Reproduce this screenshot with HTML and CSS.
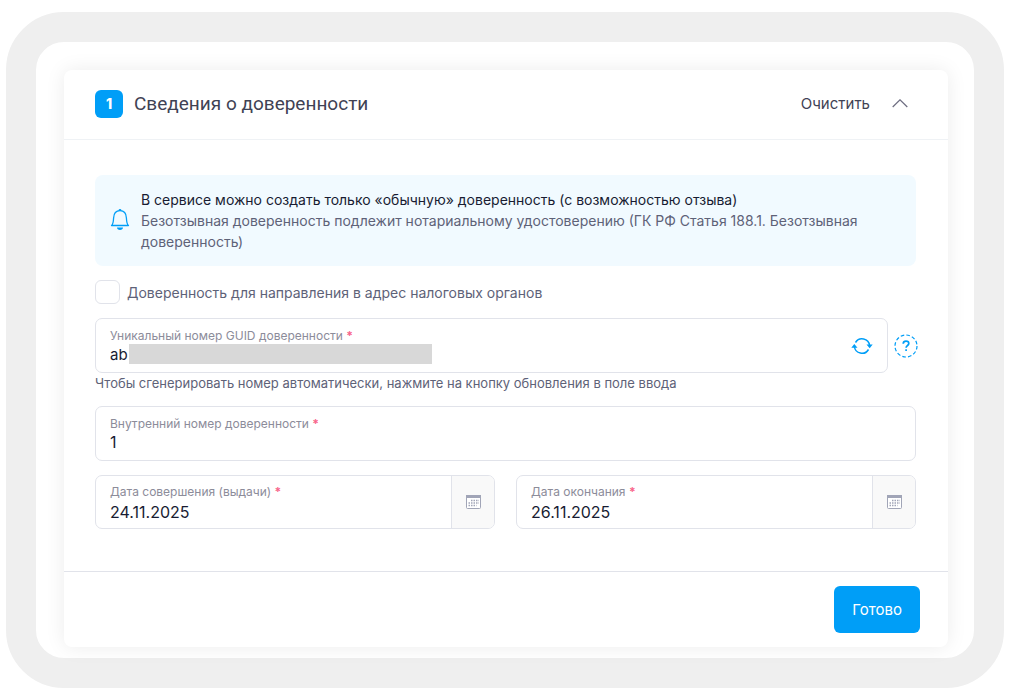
FILE: index.html
```
<!DOCTYPE html>
<html lang="ru">
<head>
  <meta charset="UTF-8">
  <meta name="viewport" content="width=device-width, initial-scale=1.0">
  <title>Сведения о доверенности</title>
  <link rel="stylesheet" href="styles.css">
</head>
<body>
  <main class="frame">
    <form class="card">
      <header class="card-header">
        <span class="step">1</span>
        <h1 class="card-title">Сведения о доверенности</h1>
        <button type="button" class="clear-btn">Очистить</button>
        <button type="button" class="icon-btn" aria-label="Свернуть">
          <svg width="16" height="10" viewBox="0 0 16 10" fill="none" stroke="#6d6d80" stroke-width="1.2"><path d="M.7 8 8 .8 15.3 8"/></svg>
        </button>
      </header>

      <div class="card-body">
        <div class="notice">
          <!-- колокольчик -->
          <svg class="notice-icon" width="20" height="24" viewBox="0 0 20 24">
            <path d="M1.500 16.500C3 15.500 3.400 12.800 3.600 9 3.800 4.500 6 1.700 10 1.700s6.200 2.800 6.400 7.300c.2 3.800.6 6.500 2.100 7.500z" fill="none" stroke="#009ef7" stroke-width="1.300" stroke-linejoin="round"/>
            <path d="M8.600 1.900V1.200a1.400 1.200 0 0 1 2.800 0v.7zM7 18.500h6c0 1.600-1.200 2.500-3 2.500S7 20.100 7 18.500z" fill="#009ef7"/>
          </svg>
          <div class="notice-text">
            <div class="notice-title">В сервисе можно создать только «обычную» доверенность (с возможностью отзыва)</div>
            <div>Безотзывная доверенность подлежит нотариальному удостоверению (ГК РФ Статья 188.1. Безотзывная доверенность)</div>
          </div>
        </div>

        <label class="check">
          <input type="checkbox" class="check-box">
          <span>Доверенность для направления в адрес налоговых органов</span>
        </label>

        <div class="guid-row">
          <div class="field">
            <div class="field-main">
              <label class="field-label" for="guid">Уникальный номер GUID доверенности <span class="req">*</span></label>
              <div class="masked">
                <input class="field-input masked-input" id="guid" type="text" value="ab">
                <span class="mask"></span>
              </div>
            </div>
            <button type="button" class="icon-btn refresh" aria-label="Обновить">
              <svg width="22" height="18" viewBox="0 0 22 18" fill="none" stroke="#009ef7" stroke-width="1.500">
                <path d="M4.500 5.500A7.600 7.600 0 0 1 18.600 8.500M17.500 12.500A7.600 7.600 0 0 1 3.400 9.500"/>
                <path d="M.3 10.800 3.300 7l3.200 3.800zM15.500 7.500h6.200L18.700 11.300z" fill="#009ef7" stroke="none"/>
              </svg>
            </button>
          </div>
          <button type="button" class="icon-btn help" aria-label="Справка">
            <svg width="24" height="24" viewBox="0 0 24 24" fill="none" stroke="#009ef7">
              <circle cx="12" cy="12" r="11" stroke-width="1.200" stroke-dasharray="3.600 2.160"/>
              <path d="M9.200 9.700c.1-1.600 1.200-2.500 2.800-2.500s2.800.9 2.800 2.300c0 2.100-2.700 1.900-2.700 4.300M12.100 15.300v1.700" stroke-width="1.700"/>
            </svg>
          </button>
        </div>
        <p class="hint">Чтобы сгенерировать номер автоматически, нажмите на кнопку обновления в поле ввода</p>

        <div class="field">
          <div class="field-main">
            <label class="field-label" for="number">Внутренний номер доверенности <span class="req">*</span></label>
            <input class="field-input" id="number" type="text" value="1">
          </div>
        </div>

        <div class="dates">
          <div class="field">
            <div class="field-main">
              <label class="field-label" for="issued">Дата совершения (выдачи) <span class="req">*</span></label>
              <input class="field-input" id="issued" type="text" value="24.11.2025">
            </div>
            <button type="button" class="calendar-btn" aria-label="Выбрать дату">
              <svg width="15" height="14" viewBox="0 0 15 14">
                <rect x=".5" y=".5" width="14" height="13" rx="1" fill="#fff" stroke="#a1a5b7"/>
                <path d="M0 0h15v3H0z" fill="#a1a5b7"/>
                <path d="M5 5.500h8M2.500 8h10.500M2.500 10.500h8" stroke="#a1a5b7" stroke-width="1.500" stroke-dasharray="1.500 1"/>
              </svg>
            </button>
          </div>
          <div class="field">
            <div class="field-main">
              <label class="field-label" for="expires">Дата окончания <span class="req">*</span></label>
              <input class="field-input" id="expires" type="text" value="26.11.2025">
            </div>
            <button type="button" class="calendar-btn" aria-label="Выбрать дату">
              <svg width="15" height="14" viewBox="0 0 15 14">
                <rect x=".5" y=".5" width="14" height="13" rx="1" fill="#fff" stroke="#a1a5b7"/>
                <path d="M0 0h15v3H0z" fill="#a1a5b7"/>
                <path d="M5 5.500h8M2.500 8h10.500M2.500 10.500h8" stroke="#a1a5b7" stroke-width="1.500" stroke-dasharray="1.500 1"/>
              </svg>
            </button>
          </div>
        </div>
      </div>

      <footer class="card-footer">
        <button type="button" class="submit">Готово</button>
      </footer>
    </form>
  </main>
</body>
</html>
```

FILE: styles.css
```
* {
  box-sizing: border-box;
}

body {
  margin: 0;
  background: #fff;
  font-family: Inter, "Noto Sans", sans-serif;
  font-size: 14px;
  line-height: 21px;
  color: #5e6278;
}

button {
  font-family: inherit;
  cursor: pointer;
}

/* серая рамка вокруг карточки */
.frame {
  margin: 12px 6px;
  padding: 28px 26px 11px 28px;
  border: 30px solid #efefef;
  border-radius: 58px;
}

.card {
  background: #fff;
  border-radius: 8px;
  box-shadow: 0 0 20px rgba(0, 0, 0, 0.08);
}

.card-header {
  display: flex;
  align-items: center;
  height: 70px;
  padding: 0 40px 2px 31px;
  border-bottom: 1px solid #eff2f5;
}

.step {
  width: 28px;
  height: 28px;
  border-radius: 6px;
  background: #009ef7;
  color: #fff;
  font-weight: 800;
  line-height: 28px;
  text-align: center;
}

.card-title {
  flex: 1;
  margin: 0 0 0 11px;
  font-family: Roboto, sans-serif;
  font-size: 19px;
  font-weight: 400;
  color: #3f4254;
}

.clear-btn {
  margin-right: 22px;
  padding: 0;
  border: 0;
  background: none;
  font-size: 15px;
  color: #3f4254;
}

.icon-btn {
  display: flex;
  padding: 0;
  border: 0;
  background: none;
}

.card-body {
  display: flex;
  flex-direction: column;
  padding: 35px 32px 42px 31px;
}

.notice {
  display: flex;
  align-items: center;
  gap: 11px;
  margin-bottom: 14px;
  padding: 14px 15px;
  border-radius: 8px;
  background: #f1faff;
}

.notice-icon {
  flex: none;
}

.notice-title {
  color: #181c32;
}

.check {
  display: flex;
  align-items: center;
  gap: 7px;
  margin-bottom: 14px;
}

.check-box {
  appearance: none;
  width: 25px;
  height: 24px;
  margin: 0;
  border: 1px solid #e1e3ea;
  border-radius: 6px;
  background: #fff;
}

/* поля ввода */
.field {
  display: flex;
  flex: 1;
  min-height: 55px;
  overflow: hidden;
  border: 1px solid #e1e3ea;
  border-radius: 7px;
}

.field-main {
  display: flex;
  flex: 1;
  flex-direction: column;
  justify-content: center;
  min-width: 0;
  padding: 0 14px;
}

.field-label {
  font-size: 12px;
  line-height: 17px;
  color: #8c8c9a;
}

.req {
  font-weight: 700;
  color: #f8648a;
}

.field-input {
  width: 100%;
  height: 20px;
  padding: 0;
  border: 0;
  outline: 0;
  background: none;
  font-family: inherit;
  font-size: 16px;
  color: #181c32;
}

.masked {
  display: flex;
}

.masked-input {
  width: 19px;
  font-size: 15px;
}

.mask {
  width: 303px;
  height: 20px;
  background: #d8d8d8;
}

.guid-row {
  display: flex;
  align-items: center;
  gap: 6px;
  margin-right: -2px;
}

.refresh {
  align-items: center;
  padding-right: 14px;
}

.hint {
  margin: 0 0 13px;
  font-size: 13px;
  line-height: 20px;
}

.dates {
  display: flex;
  gap: 21px;
  margin-top: 14px;
}

.dates .field {
  min-height: 54px;
}

.dates .field-main {
  gap: 2px;
}

.calendar-btn {
  display: flex;
  align-items: center;
  justify-content: center;
  width: 43px;
  padding: 0;
  border: 0;
  border-left: 1px solid #e1e3ea;
  background: #f9f9f9;
}

.card-footer {
  display: flex;
  justify-content: flex-end;
  padding: 14px 28px;
  border-top: 1px solid #e1e3ea;
}

.submit {
  height: 47px;
  padding: 0 18px;
  border: 0;
  border-radius: 6px;
  background: #009ef7;
  color: #fff;
  font-size: 15px;
}
```
